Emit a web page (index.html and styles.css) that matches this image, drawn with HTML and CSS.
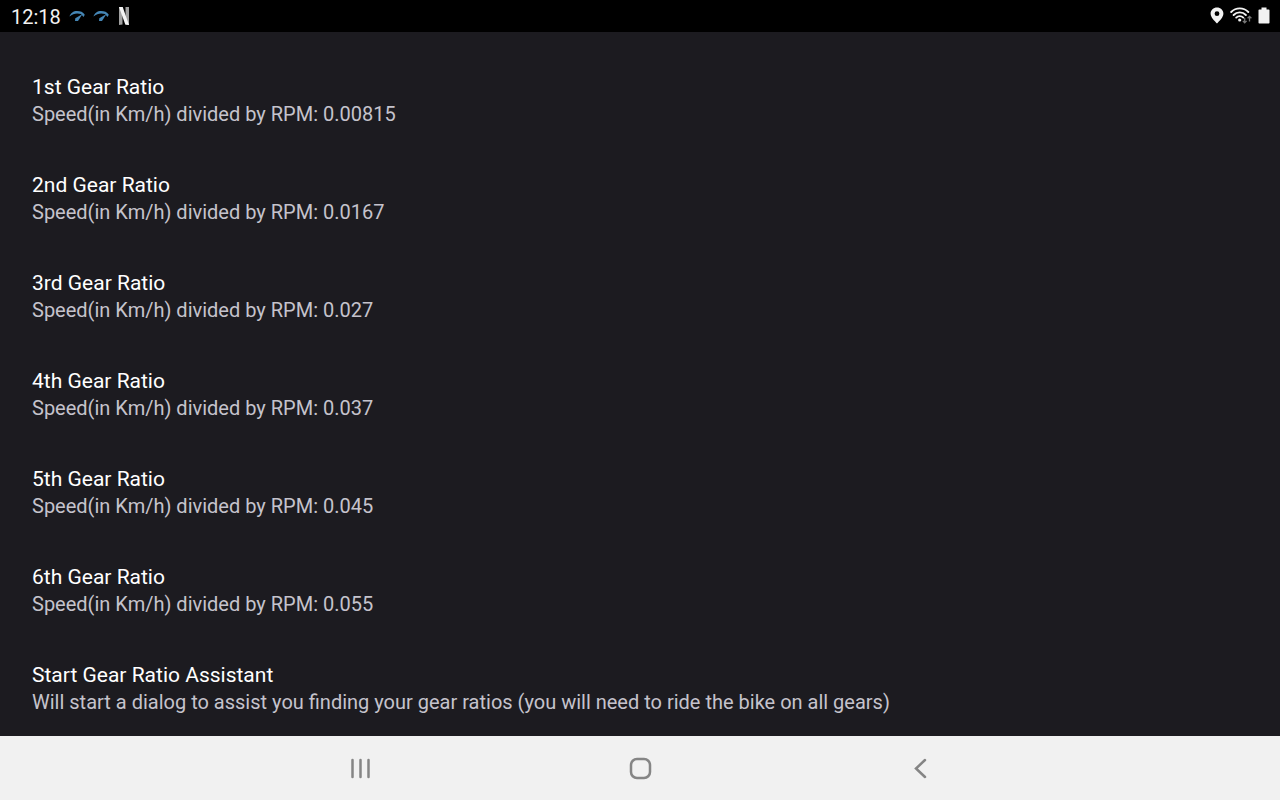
FILE: index.html
```html
<!DOCTYPE html>
<html lang="en">
<head>
    <meta charset="UTF-8">
    <meta name="viewport" content="width=device-width, initial-scale=1.0">
    <title>Gear Ratios</title>
    <link rel="stylesheet" href="styles.css">
</head>
<body>
    <header class="status-bar">
        <div class="status-left">
            <time class="clock">12:18</time>
            <svg class="gauge" viewBox="0 0 16 12" aria-hidden="true">
                <path d="M.5 6.500C1.500 3 4.500 1 8 1s6 1 7.800 3.800L14.500 7 12 4C8.500 2.800 4 3.200.5 6.500Z"/>
                <path d="M13.500 4L9 11H6l.3-2.800Z"/>
            </svg>
            <svg class="gauge" viewBox="0 0 16 12" aria-hidden="true">
                <path d="M.5 6.500C1.500 3 4.500 1 8 1s6 1 7.800 3.800L14.500 7 12 4C8.500 2.800 4 3.200.5 6.500Z"/>
                <path d="M13.500 4L9 11H6l.3-2.800Z"/>
            </svg>
            <svg class="app-icon" viewBox="0 0 10 18" aria-hidden="true">
                <path fill="#a0a0a0" d="M0 0h3.500v17.500L0 18zM6.500 0H10v18l-3.500-.5z"/>
                <path fill="#f4f4f4" d="M0 0h3.700L10 18l-3.700-.5z"/>
            </svg>
        </div>
        <div class="status-right">
            <svg class="pin" viewBox="0 0 14 18" aria-hidden="true">
                <path fill-rule="evenodd" d="M7 .5C3.400.5.6 3.200.6 6.600c0 4 3.900 7.300 6.400 10 2.500-2.700 6.400-6 6.400-10C13.400 3.200 10.600.5 7 .5zm0 3.800a2.400 2.400 0 1 1 0 4.800 2.400 2.400 0 0 1 0-4.800z"/>
            </svg>
            <svg class="wifi" viewBox="0 0 22 18" aria-hidden="true">
                <g fill="none" stroke="#f2f2f2" stroke-width="1.900" stroke-linecap="round">
                    <path d="M1.200 5C6 .2 13.500.2 18.300 5"/>
                    <path d="M3.600 8C7 4.500 12.500 4.500 15.900 8"/>
                    <path d="M6.200 10.600C8.200 8.600 11.300 8.600 13.300 10.600"/>
                </g>
                <circle cx="9.700" cy="13" r="1.600" fill="#f2f2f2"/>
                <g fill="none" stroke="#777" stroke-width="1.300">
                    <path d="M14.700 11v5M12.800 13.900l1.900 1.900 1.900-1.900"/>
                    <path d="M19.500 14.500v-5M17.600 11.200l1.900-1.900 1.900 1.900"/>
                </g>
            </svg>
            <svg class="battery" viewBox="0 0 12 18" aria-hidden="true">
                <path d="M3.500 .5h5v2h2.200q.8 0 .8.800v12.400q0 .8-.8.800H1.300q-.8 0-.8-.8V3.300q0-.8.800-.8h2.200z"/>
            </svg>
        </div>
    </header>

    <main class="settings">
        <ul class="preference-list">
            <li class="preference">
                <h2>1st Gear Ratio</h2>
                <p>Speed(in Km/h) divided by RPM: 0.00815</p>
            </li>
            <li class="preference">
                <h2>2nd Gear Ratio</h2>
                <p>Speed(in Km/h) divided by RPM: 0.0167</p>
            </li>
            <li class="preference">
                <h2>3rd Gear Ratio</h2>
                <p>Speed(in Km/h) divided by RPM: 0.027</p>
            </li>
            <li class="preference">
                <h2>4th Gear Ratio</h2>
                <p>Speed(in Km/h) divided by RPM: 0.037</p>
            </li>
            <li class="preference">
                <h2>5th Gear Ratio</h2>
                <p>Speed(in Km/h) divided by RPM: 0.045</p>
            </li>
            <li class="preference">
                <h2>6th Gear Ratio</h2>
                <p>Speed(in Km/h) divided by RPM: 0.055</p>
            </li>
            <li class="preference">
                <h2>Start Gear Ratio Assistant</h2>
                <p>Will start a dialog to assist you finding your gear ratios (you will need to ride the bike on all gears)</p>
            </li>
        </ul>
    </main>

    <nav class="nav-bar">
        <button type="button" aria-label="Recent apps">
            <svg viewBox="0 0 24 24" aria-hidden="true"><path d="M4.500 4v17M12.500 4v17M20.500 4v17"/></svg>
        </button>
        <button type="button" aria-label="Home">
            <svg viewBox="0 0 24 24" aria-hidden="true"><rect x="3" y="3" width="19" height="19" rx="6"/></svg>
        </button>
        <button type="button" aria-label="Back">
            <svg viewBox="0 0 24 24" aria-hidden="true"><path d="M17 4L8 12.500L17 21"/></svg>
        </button>
    </nav>
</body>
</html>
```

FILE: styles.css
```css
* {
    box-sizing: border-box;
}
body {
    display: flex;
    flex-direction: column;
    height: 100vh;
    margin: 0;
    background-color: #1c1b20;
    color: #fff;
    font-family: Roboto, sans-serif;
}
.status-bar {
    display: flex;
    flex-shrink: 0;
    justify-content: space-between;
    align-items: center;
    height: 32px;
    padding: 0 10px 0 11px;
    background-color: #000;
}
.status-left {
    display: flex;
    align-items: center;
    gap: 8px;
}
.status-right {
    display: flex;
    align-items: center;
    gap: 6px;
}
.status-right svg {
    height: 18px;
    fill: #f2f2f2;
}
.clock {
    padding-top: 2px;
    color: #f2f2f2;
    font-size: 20px;
    line-height: 30px;
}
.gauge {
    width: 16px;
    height: 12px;
    fill: #4586b5;
}
.app-icon {
    width: 10px;
    height: 18px;
    margin-left: 2px;
}
.pin {
    width: 14px;
}
.wifi {
    width: 22px;
}
.battery {
    width: 12px;
}
.settings {
    flex: 1;
    min-height: 0;
    overflow-y: auto;
    scrollbar-width: none;
}
.preference-list {
    margin: 0;
    padding: 20px 0 0;
    list-style: none;
}
.preference {
    padding: 21px 32px 23px;
}
.preference h2 {
    margin: 0;
    font-size: 21px;
    font-weight: 400;
    line-height: 28px;
}
.preference p {
    margin: 0;
    color: #c5c3cc;
    font-size: 20px;
    line-height: 26px;
}
.nav-bar {
    display: flex;
    flex-shrink: 0;
    justify-content: center;
    height: 64px;
    background-color: #f1f1f1;
}
.nav-bar button {
    display: flex;
    justify-content: center;
    align-items: center;
    width: 280px;
    padding: 0;
    border: none;
    background: none;
    cursor: pointer;
}
.nav-bar svg {
    width: 24px;
    height: 24px;
    fill: none;
    stroke: #858585;
    stroke-width: 2.5;
    stroke-linecap: round;
}
```
